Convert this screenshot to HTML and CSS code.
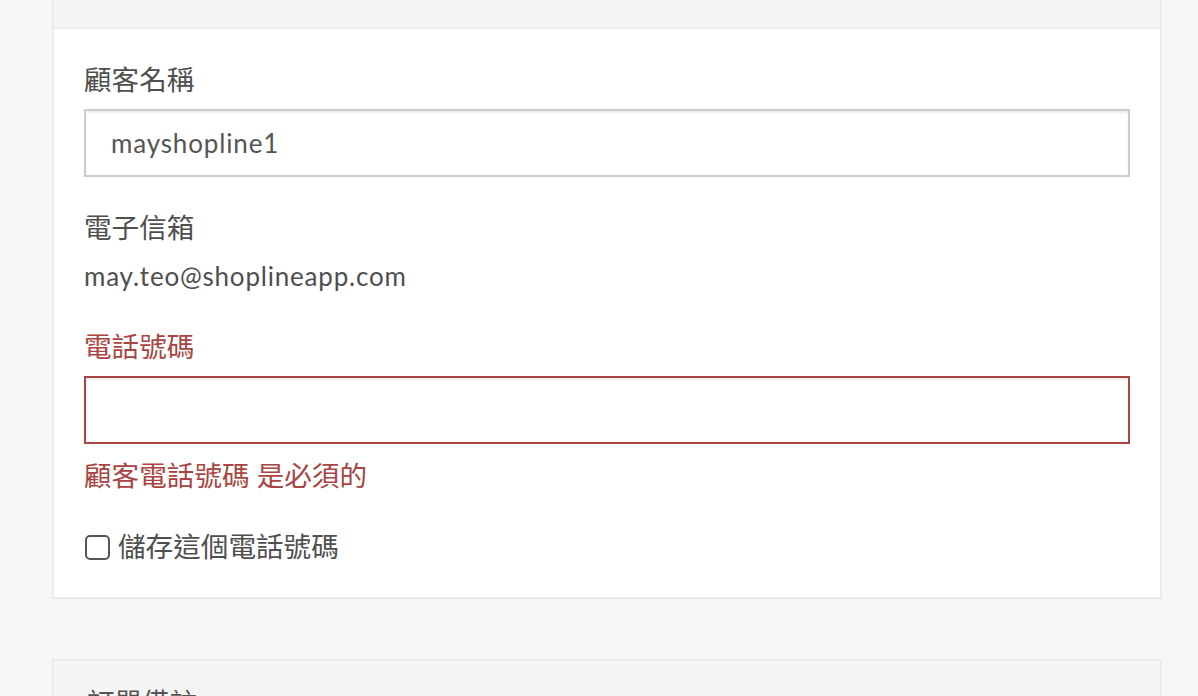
FILE: index.html
```html
<!DOCTYPE html>
<html lang="zh-Hant">
<head>
<meta charset="utf-8">
<title>顧客資料</title>
<link rel="stylesheet" href="styles.css">
</head>
<body>
<main class="page">
  <section class="card">
    <div class="card-header card-header-cut"></div>
    <div class="card-body">
      <div class="form-group">
        <label class="label" for="name">顧客名稱</label>
        <input class="input" id="name" type="text" value="mayshopline1">
      </div>
      <div class="form-group">
        <div class="label">電子信箱</div>
        <div class="static">may.teo@shoplineapp.com</div>
      </div>
      <div class="form-group has-error">
        <label class="label" for="phone">電話號碼</label>
        <input class="input" id="phone" type="text" value="">
        <div class="error-text">顧客電話號碼 是必須的</div>
      </div>
      <label class="check">
        <span class="check-box"></span>
        <span class="check-text">儲存這個電話號碼</span>
      </label>
    </div>
  </section>
  <section class="card">
    <div class="card-header">
      <h2 class="card-title">訂單備註</h2>
    </div>
  </section>
</main>
</body>
</html>
```
FILE: styles.css
```css
* { box-sizing: border-box; }
html, body {
  margin: 0;
  padding: 0;
  background: #f7f7f9;
}
body {
  font-family: "Lato", "Noto Sans CJK TC", sans-serif;
  color: #4f4f4f;
  font-size: 27.6px;
}
.page {
  width: 1162px;
  padding-left: 52px;
}
.card {
  background: #fff;
  border: 2px solid #ebebed;
  margin-bottom: 60px;
}
.card-header {
  background: #f5f5f5;
  border-bottom: 2px solid #ebebed;
  padding: 22px 33px;
}
.card-header-cut {
  height: 29px;
  padding: 0;
  margin-top: -2px;
}
.card-title {
  margin: 0;
  font-size: 27.6px;
  font-weight: normal;
  line-height: 40px;
  color: #555;
}
.card-body {
  padding: 32px 30px 31px;
}
.form-group {
  margin-bottom: 33px;
}
.form-group:first-child {
  margin-bottom: 32px;
}
.label {
  display: block;
  line-height: 38px;
  margin-bottom: 10px;
  color: #4f4f4f;
}
.input {
  display: block;
  width: 100%;
  height: 68px;
  border: 2px solid #cccccc;
  border-radius: 0;
  box-shadow: inset 0 2px 2px rgba(0, 0, 0, 0.075);
  padding: 0 25px;
  font-family: "Lato", "Noto Sans CJK TC", sans-serif;
  font-size: 26px;
  letter-spacing: 0.85px;
  color: #555;
  background: #fff;
  outline: none;
}
.static {
  font-size: 26px;
  line-height: 38px;
  letter-spacing: 0.8px;
  color: #4f4f4f;
}
.has-error .label { color: #a94442; }
.has-error .input { border-color: #a94442; }
.error-text {
  margin-top: 13px;
  line-height: 38px;
  color: #a94442;
}
.has-error { margin-bottom: 33px; }
.check {
  display: flex;
  align-items: center;
  gap: 8px;
  height: 38px;
}
.check-box {
  width: 25px;
  height: 25px;
  border: 2px solid #555;
  border-radius: 5px;
  background: #fff;
  margin-left: 1px;
}
.check-text {
  line-height: 38px;
  color: #4f4f4f;
}
```
